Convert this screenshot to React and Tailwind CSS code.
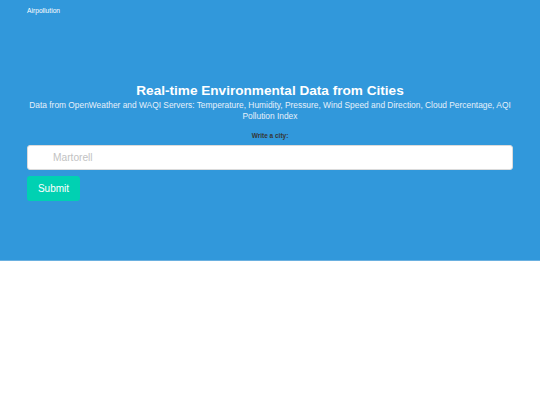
export default function App() {
    return (
        <div className="min-h-[405px] bg-white font-['Liberation_Sans',Arial,sans-serif]">
            <section className="h-[261px] bg-[#3198db] border-b border-[#6ab0e0] flex flex-col">
                <div className="px-[27px] pt-[6px] text-[6.7px] leading-[10px] text-white">Airpollution</div>
                <div className="px-[27px] pt-[66px] text-center">
                    <h1 className="text-[13.6px] leading-[17px] font-bold text-white">Real-time Environmental Data from Cities</h1>
                    <p className="text-[8.4px] leading-[11px] text-[#e6f0fa] mt-[1px]">
                        Data from OpenWeather and WAQI Servers: Temperature, Humidity, Pressure, Wind Speed and Direction, Cloud Percentage, AQI Pollution Index
                    </p>
                    <form className="mt-[9px]" onSubmit={(e) => e.preventDefault()}>
                        <label className="block text-[6.5px] leading-[10px] font-bold text-[#363636]">Write a city:</label>
                        <input
                            type="text"
                            placeholder="Martorell"
                            className="mt-[4px] block w-full h-[25px] rounded-[3px] bg-white border border-[#dbdbdb] pl-[25px] text-[10.2px] text-[#363636] placeholder:text-[#c2c2c2] outline-none"
                        />
                        <button
                            type="submit"
                            className="mt-[6px] block h-[25px] w-[53px] rounded-[3px] bg-[#00d1b2] text-[10px] text-white"
                        >
                            Submit
                        </button>
                    </form>
                </div>
            </section>
        </div>
    );
}
